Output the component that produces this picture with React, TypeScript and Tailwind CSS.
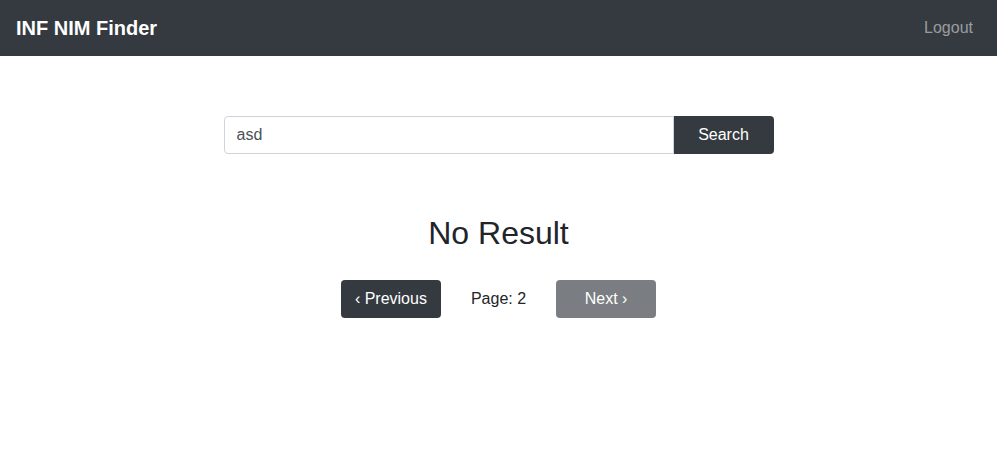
import { useState } from "react";

export default function App() {
  const [query, setQuery] = useState("asd");
  const page = 2;

  return (
    <div className="min-h-screen bg-white font-['Liberation_Sans',Arial,sans-serif] text-[#212529]">
      <nav className="flex h-14 items-center justify-between bg-[#343a40] pl-4 pr-6">
        <span className="text-xl font-bold text-white">INF NIM Finder</span>
        <a href="#" className="text-base text-white/50">
          Logout
        </a>
      </nav>

      <main className="flex flex-col items-center pt-[60px]">
        <form
          className="flex w-[550px]"
          onSubmit={(e) => e.preventDefault()}
        >
          <input
            value={query}
            onChange={(e) => setQuery(e.target.value)}
            className="h-[38px] flex-1 rounded-l border border-[#ced4da] px-3 text-base text-[#495057] outline-none"
          />
          <button
            type="submit"
            className="h-[38px] w-[100px] rounded-r bg-[#343a40] text-base text-white"
          >
            Search
          </button>
        </form>

        <h2 className="mt-[60px] text-[32px] leading-[38px]">No Result</h2>

        <div className="mt-[28px] flex items-center gap-[30px]">
          <button className="h-[38px] w-[100px] rounded bg-[#343a40] text-base text-white">
            ‹ Previous
          </button>
          <span className="text-base">Page: {page}</span>
          <button
            disabled
            className="h-[38px] w-[100px] rounded bg-[#343a40] text-base text-white opacity-65"
          >
            Next ›
          </button>
        </div>
      </main>
    </div>
  );
}
